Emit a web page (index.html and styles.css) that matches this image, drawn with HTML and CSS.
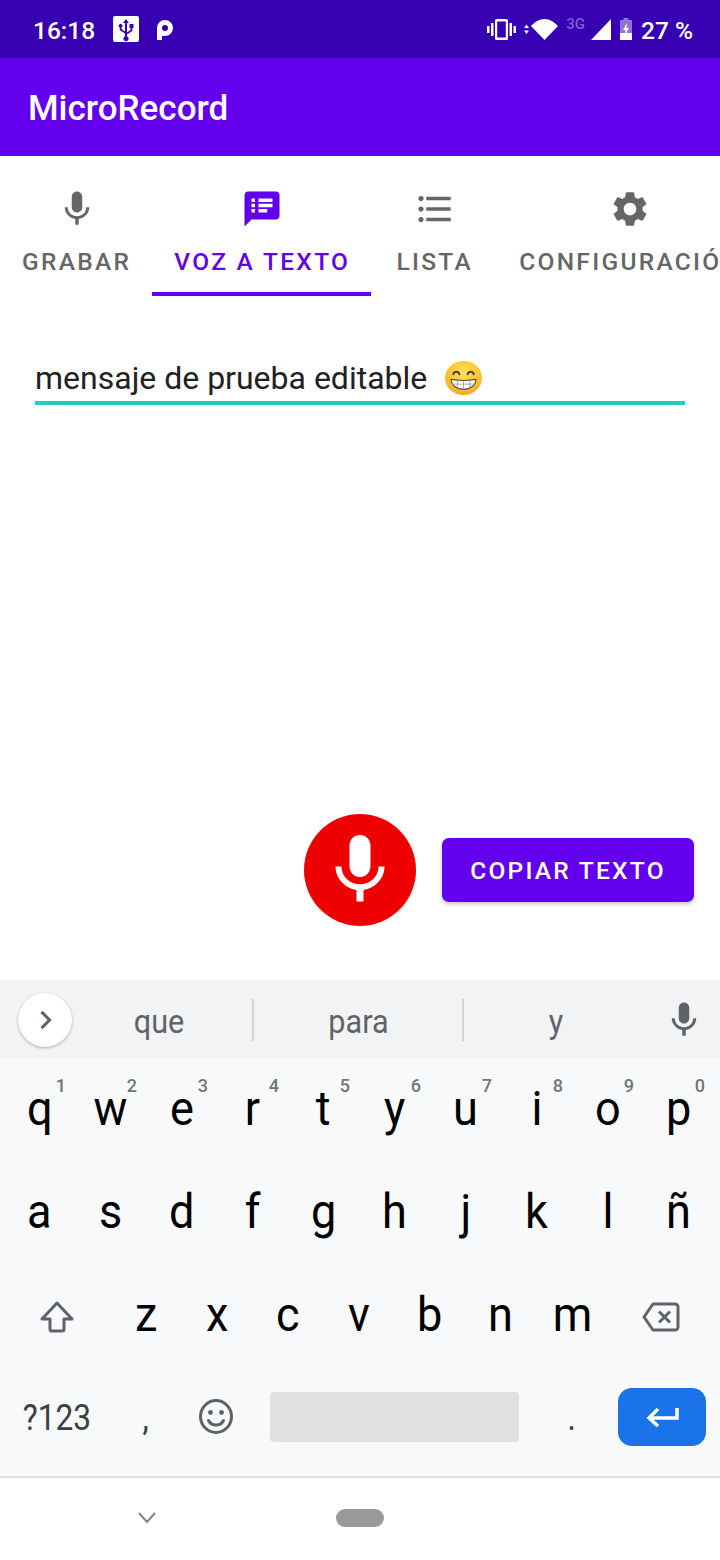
FILE: index.html
```html
<!DOCTYPE html>
<html>
<head>
    <title>MicroRecord</title>
    <link rel="stylesheet" href="styles.css">
</head>
<body>
    <svg class="defs" width="0" height="0">
        <symbol id="mic" viewBox="0 0 24 24"><path d="M12 14c1.66 0 2.99-1.34 2.99-3L15 5c0-1.66-1.34-3-3-3S9 3.34 9 5v6c0 1.66 1.34 3 3 3zm5.3-3c0 3-2.54 5.1-5.3 5.1S6.7 14 6.7 11H5c0 3.41 2.72 6.23 6 6.72V21h2v-3.28c3.28-.48 6-3.3 6-6.72h-1.7z"/></symbol>
    </svg>

    <div class="status">
        <span class="time">16:18</span>
        <svg class="usb" viewBox="0 0 26 26"><rect width="26" height="26" rx="2" fill="#fff"/><path d="M13 3l3 4h-2v9.500l3.500-2.500v-2H16.500V8h4v4h-1.200v3l-5.300 3.600v1.600a2.600 2.600 0 1 1-2 0V17.500L6.700 14V11.600A1.900 1.900 0 1 1 8.500 11.600V13l3.500 2.400V7H10z" fill="#3700b3"/></svg>
        <svg class="park" viewBox="0 0 16 20"><path d="M0 20V8a8 8 0 1 1 8 8H5v4zM8 5a3 3 0 1 0 0 6 3 3 0 0 0 0-6z" fill="#fff" fill-rule="evenodd"/></svg>
        <span class="status-right">
            <svg class="vibrate" viewBox="0 0 29 21"><path d="M0 7h2.500v7H0zM4 4h2.500v13H4zM26.500 7H29v7h-2.500zM22.500 4H25v13h-2.500zM9.500 0h10a1.500 1.500 0 0 1 1.500 1.500v18a1.500 1.500 0 0 1-1.500 1.500h-10A1.500 1.500 0 0 1 8 19.500v-18A1.500 1.500 0 0 1 9.500 0zm.7 2.500v16h8.600v-16z" fill="#fff" fill-rule="evenodd"/></svg>
            <svg class="wifi" viewBox="0 0 34 21"><path d="M7 7C11 3 15 0 20.500 0S30 3 34 7L20.500 21zM2.500 5.500L5 9H0zM2.500 15L0 11.500h5z" fill="#fff"/></svg>
            <span class="net">3G</span>
            <svg class="signal" viewBox="0 0 20 21"><path d="M20 0v21H0z" fill="#fff"/></svg>
            <svg class="battery" viewBox="0 0 12 22"><path d="M3.500 0h5v2H12v20H0V2h3.500z" fill="#fff" opacity=".45"/><path d="M0 15h12v7H0z" fill="#fff"/><path d="M7 5L3 12h2.500L4.500 18l4.500-8H6.500z" fill="#fff"/></svg>
            <span class="pct">27 %</span>
        </span>
    </div>

    <div class="appbar">MicroRecord</div>

    <div class="tabs">
        <div class="tab">
            <svg class="tab-icon"><use href="#mic"/></svg>
            <span>GRABAR</span>
        </div>
        <div class="tab active">
            <svg class="tab-icon" viewBox="0 0 24 24"><path d="M20 2H4c-1.100 0-1.990.9-1.990 2L2 22l4-4h14c1.100 0 2-.9 2-2V4c0-1.100-.9-2-2-2zM8 14H6v-2h2v2zm0-3H6V9h2v2zm0-3H6V6h2v2zm7 6h-5v-2h5v2zm3-3h-8V9h8v2zm0-3h-8V6h8v2z"/></svg>
            <span>VOZ A TEXTO</span>
        </div>
        <div class="tab">
            <svg class="tab-icon" viewBox="0 0 24 24"><path d="M4 10.500c-.83 0-1.500.67-1.500 1.500s.67 1.500 1.500 1.500 1.500-.67 1.500-1.500-.67-1.500-1.500-1.500zm0-6c-.83 0-1.500.67-1.500 1.500S3.170 7.500 4 7.500 5.500 6.830 5.500 6 4.830 4.500 4 4.500zm0 12c-.83 0-1.500.68-1.500 1.500s.68 1.500 1.500 1.500 1.500-.68 1.500-1.500-.67-1.500-1.500-1.500zM7 19h14v-2H7v2zm0-6h14v-2H7v2zm0-8v2h14V5H7z"/></svg>
            <span>LISTA</span>
        </div>
        <div class="tab">
            <svg class="tab-icon" viewBox="0 0 24 24"><path d="M19.140 12.940c.04-.3.06-.61.06-.94 0-.32-.02-.64-.07-.94l2.030-1.580c.18-.14.23-.41.12-.61l-1.920-3.320c-.12-.22-.37-.29-.59-.22l-2.390.96c-.5-.38-1.030-.7-1.620-.94l-.36-2.540c-.04-.24-.24-.41-.48-.41h-3.840c-.24 0-.43.17-.47.41l-.36 2.540c-.59.24-1.130.57-1.620.94l-2.390-.96c-.22-.08-.47 0-.59.22L2.740 8.870c-.12.21-.08.47.12.61l2.030 1.580c-.05.3-.09.63-.09.94s.02.64.07.94l-2.030 1.580c-.18.14-.23.41-.12.61l1.920 3.320c.12.22.37.29.59.22l2.390-.96c.5.38 1.030.7 1.620.94l.36 2.540c.05.24.24.41.48.41h3.840c.24 0 .44-.17.47-.41l.36-2.540c.59-.24 1.130-.56 1.620-.94l2.390.96c.22.08.47 0 .59-.22l1.920-3.320c.12-.22.07-.47-.12-.61l-2.010-1.580zM12 15.600c-1.980 0-3.600-1.620-3.600-3.600s1.620-3.600 3.600-3.600 3.600 1.620 3.600 3.600-1.620 3.600-3.600 3.600z"/></svg>
            <span>CONFIGURACIÓN</span>
        </div>
    </div>

    <div class="content">
        <div class="field">
            <span>mensaje de prueba editable</span>
            <svg class="emoji" viewBox="0 0 36 36" preserveAspectRatio="none">
                <defs><radialGradient id="face" cx="50%" cy="35%" r="70%"><stop offset="0" stop-color="#fde25f"/><stop offset=".7" stop-color="#fbc02d"/><stop offset="1" stop-color="#ef9a1a"/></radialGradient></defs>
                <circle cx="18" cy="18" r="18" fill="url(#face)"/>
                <path d="M8 14c1-3.500 5-3.500 6 0M22 14c1-3.500 5-3.500 6 0" fill="none" stroke="#5d4037" stroke-width="2" stroke-linecap="round"/>
                <path d="M6 19.500c8 1.500 16 1.500 24 0 0 6-5 10.500-12 10.500S6 25.500 6 19.500z" fill="#fff" stroke="#6d4c41" stroke-width="1.200"/>
                <path d="M6.500 24.500h23M12 20.500v8M18 21v9M24 20.500v8" stroke="#a0a0a0" stroke-width=".9"/>
            </svg>
        </div>
        <div class="actions">
            <div class="rec"><svg class="rec-icon"><use href="#mic"/></svg></div>
            <div class="copy">COPIAR TEXTO</div>
        </div>
    </div>

    <div class="suggest">
        <div class="chevron"><svg viewBox="0 0 24 24"><path d="M9 5l7 7-7 7" fill="none" stroke="#5f6368" stroke-width="2.600"/></svg></div>
        <div class="word first"><span>que</span></div>
        <div class="word sep"><span>para</span></div>
        <div class="word sep last"><span>y</span></div>
        <svg class="kb-mic"><use href="#mic"/></svg>
    </div>

    <div class="keyboard">
        <div class="key"><span>q</span><i>1</i></div>
        <div class="key"><span>w</span><i>2</i></div>
        <div class="key"><span>e</span><i>3</i></div>
        <div class="key"><span>r</span><i>4</i></div>
        <div class="key"><span>t</span><i>5</i></div>
        <div class="key"><span>y</span><i>6</i></div>
        <div class="key"><span>u</span><i>7</i></div>
        <div class="key"><span>i</span><i>8</i></div>
        <div class="key"><span>o</span><i>9</i></div>
        <div class="key"><span>p</span><i>0</i></div>

        <div class="key"><span>a</span></div>
        <div class="key"><span>s</span></div>
        <div class="key"><span>d</span></div>
        <div class="key"><span>f</span></div>
        <div class="key"><span>g</span></div>
        <div class="key"><span>h</span></div>
        <div class="key"><span>j</span></div>
        <div class="key"><span>k</span></div>
        <div class="key"><span>l</span></div>
        <div class="key"><span>ñ</span></div>

        <div class="key wide"><svg class="key-icon shift" viewBox="0 0 34 32"><path d="M17 2L2 18h8v10a2 2 0 0 0 2 2h10a2 2 0 0 0 2-2V18h8z" fill="none" stroke="#5f6368" stroke-width="3" stroke-linejoin="round"/></svg></div>
        <div class="key"><span>z</span></div>
        <div class="key"><span>x</span></div>
        <div class="key"><span>c</span></div>
        <div class="key"><span>v</span></div>
        <div class="key"><span>b</span></div>
        <div class="key"><span>n</span></div>
        <div class="key"><span>m</span></div>
        <div class="key wide"><svg class="key-icon del" viewBox="0 0 38 30"><path d="M11 2h22a3 3 0 0 1 3 3v20a3 3 0 0 1-3 3H11L2 15z" fill="none" stroke="#5f6368" stroke-width="3" stroke-linejoin="round"/><path d="M17 9.500l11 11M28 9.500L17 20.500" stroke="#5f6368" stroke-width="3"/></svg></div>

        <div class="key wide fn"><span>?123</span></div>
        <div class="key fn"><span>,</span></div>
        <div class="key"><svg class="key-icon smile" viewBox="0 0 34 35"><ellipse cx="17" cy="17.500" rx="15.500" ry="16" fill="none" stroke="#5f6368" stroke-width="3"/><circle cx="11.500" cy="13.500" r="2.400" fill="#5f6368"/><circle cx="22.500" cy="13.500" r="2.400" fill="#5f6368"/><path d="M9.500 21.500c3 6 12 6 15 0" fill="none" stroke="#5f6368" stroke-width="3" stroke-linecap="round"/></svg></div>
        <div class="key space"><div class="space-bar"></div></div>
        <div class="key fn"><span>.</span></div>
        <div class="key wide"><div class="enter"><svg viewBox="0 0 34 20"><path d="M32 1v10H5M13 2L4 11l9 8" fill="none" stroke="#fff" stroke-width="3.500"/></svg></div></div>
    </div>

    <div class="nav">
        <svg class="nav-back" viewBox="0 0 18 12"><path d="M1 1l8 9 8-9" fill="none" stroke="#80868b" stroke-width="2"/></svg>
        <div class="nav-home"></div>
    </div>
</body>
</html>
```

FILE: styles.css
```css
html, body {
    margin: 0;
    height: 100%;
}
body {
    width: 720px;
    height: 1560px;
    overflow: hidden;
    display: flex;
    flex-direction: column;
    font-family: Roboto, sans-serif;
    background-color: #fff;
}
.defs {
    position: absolute;
}

/* status bar */
.status {
    height: 58px;
    flex-shrink: 0;
    display: flex;
    align-items: center;
    padding: 0 27px 0 33px;
    background-color: #3700b3;
    color: #fff;
    font-weight: 500;
    font-size: 24.500px;
}
.time {
    width: 80px;
    padding-top: 3px;
}
.usb {
    width: 26px;
    height: 26px;
}
.park {
    width: 16px;
    height: 20px;
    margin: 2px 0 0 18px;
}
.status-right {
    margin-left: auto;
    display: flex;
    align-items: center;
}
.vibrate {
    width: 29px;
    height: 21px;
}
.wifi {
    width: 34px;
    height: 21px;
    margin-left: 8px;
}
.net {
    font-size: 15px;
    color: #7e5fd0;
    margin: 0 6px 10px 8px;
}
.signal {
    width: 20px;
    height: 21px;
}
.battery {
    width: 12px;
    height: 22px;
    margin-left: 9px;
}
.pct {
    margin-left: 9px;
    padding-top: 3px;
}

/* app bar */
.appbar {
    height: 98px;
    flex-shrink: 0;
    box-sizing: border-box;
    display: flex;
    align-items: center;
    padding: 2px 0 0 28px;
    background-color: #6200ee;
    color: #fff;
    font-size: 35px;
    font-weight: 500;
}

/* tabs */
.tabs {
    height: 140px;
    flex-shrink: 0;
    display: flex;
    overflow: hidden;
}
.tab {
    flex-shrink: 0;
    min-width: 126px;
    display: flex;
    flex-direction: column;
    align-items: center;
    padding: 32px 21px 0 22px;
    box-sizing: border-box;
    color: #666;
    fill: #666;
    font-size: 24.500px;
    font-weight: 500;
    letter-spacing: 2.300px;
}
.tab span {
    margin-top: 17px;
}
.tab-icon {
    width: 42px;
    height: 42px;
}
.tab.active {
    color: #6200ee;
    fill: #6200ee;
    border-bottom: 4px solid #6200ee;
}

/* content */
.content {
    flex: 1;
    display: flex;
    flex-direction: column;
    justify-content: space-between;
}
.field {
    margin: 63px 35px 0;
    height: 46px;
    padding-bottom: 4px;
    box-sizing: border-box;
    display: flex;
    align-items: center;
    gap: 18px;
    border-bottom: 4px solid #1dcdc4;
    color: #212121;
    font-size: 32px;
}
.emoji {
    width: 37px;
    height: 34px;
}
.actions {
    display: flex;
    align-items: center;
    justify-content: flex-end;
    gap: 26px;
    padding: 0 26px 54px 0;
}
.rec {
    width: 112px;
    height: 112px;
    border-radius: 50%;
    background-color: #ee0000;
    display: flex;
    align-items: center;
    justify-content: center;
}
.rec-icon {
    width: 84px;
    height: 84px;
    fill: #fff;
}
.copy {
    width: 252px;
    height: 64px;
    display: flex;
    align-items: center;
    justify-content: center;
    border-radius: 7px;
    background-color: #6200ee;
    color: #fff;
    font-size: 24.500px;
    font-weight: 500;
    letter-spacing: 2.250px;
    box-shadow: 0 2px 4px rgba(0, 0, 0, .25);
}

/* keyboard */
.suggest {
    height: 79px;
    flex-shrink: 0;
    display: flex;
    align-items: center;
    background-color: #f1f3f4;
    color: #5f6368;
    font-size: 34px;
}
.chevron {
    width: 54px;
    height: 54px;
    margin-left: 18px;
    flex-shrink: 0;
    display: flex;
    align-items: center;
    justify-content: center;
    border-radius: 50%;
    background-color: #fff;
    box-shadow: 0 1px 3px rgba(0, 0, 0, .3);
}
.chevron svg {
    width: 28px;
    height: 28px;
}
.word {
    height: 42px;
    display: flex;
    align-items: center;
    justify-content: center;
    width: 209px;
    box-sizing: border-box;
}
.word span {
    display: inline-block;
    transform: scaleX(.9);
    padding-top: 2px;
}
.word.first {
    width: 180px;
    padding-right: 5px;
}
.word.sep {
    border-left: 2px solid #d2d4d6;
    width: 210px;
}
.word.last {
    width: 186px;
}
.kb-mic {
    width: 42px;
    height: 42px;
    margin-left: 15px;
    fill: #5f6368;
}
.keyboard {
    height: 419px;
    flex-shrink: 0;
    box-sizing: border-box;
    padding: 0 6px 0 4px;
    display: grid;
    grid-template-columns: repeat(20, 1fr);
    grid-template-rows: 103px 103px 103px 97px;
    background-color: #f8f9fa;
    border-bottom: 2px solid #e0e0e0;
    color: #000;
    font-size: 49px;
}
.key {
    grid-column: span 2;
    position: relative;
    display: flex;
    align-items: center;
    justify-content: center;
}
.key span {
    display: inline-block;
    margin-bottom: 4px;
    transform: scaleX(.92);
}
.key i {
    position: absolute;
    top: 16px;
    right: 9px;
    font-style: normal;
    font-size: 18px;
    font-weight: 500;
    color: #70757a;
}
.key.wide {
    grid-column: span 3;
}
.key.space {
    grid-column: span 8;
}
.key.fn {
    color: #3c4043;
    font-size: 36px;
}
.key.fn span {
    margin: 2px 0 0;
    transform: scaleX(.88);
}
.key-icon.shift {
    width: 34px;
    height: 32px;
}
.key-icon.del {
    width: 38px;
    height: 30px;
}
.key-icon.smile {
    width: 34px;
    height: 35px;
    margin-right: 2px;
}
.space-bar {
    width: 249px;
    height: 50px;
    border-radius: 4px;
    background-color: #e0e0e0;
}
.enter {
    width: 88px;
    height: 58px;
    margin-left: 2px;
    display: flex;
    align-items: center;
    justify-content: center;
    border-radius: 14px;
    background-color: #1a73e8;
}
.enter svg {
    width: 34px;
    height: 20px;
}

/* nav bar */
.nav {
    height: 82px;
    flex-shrink: 0;
    display: flex;
    align-items: center;
    padding: 0 0 2px 138px;
    box-sizing: border-box;
}
.nav-back {
    width: 18px;
    height: 12px;
}
.nav-home {
    width: 48px;
    height: 18px;
    margin-left: 180px;
    border-radius: 9px;
    background-color: #9a9a9a;
}
```
